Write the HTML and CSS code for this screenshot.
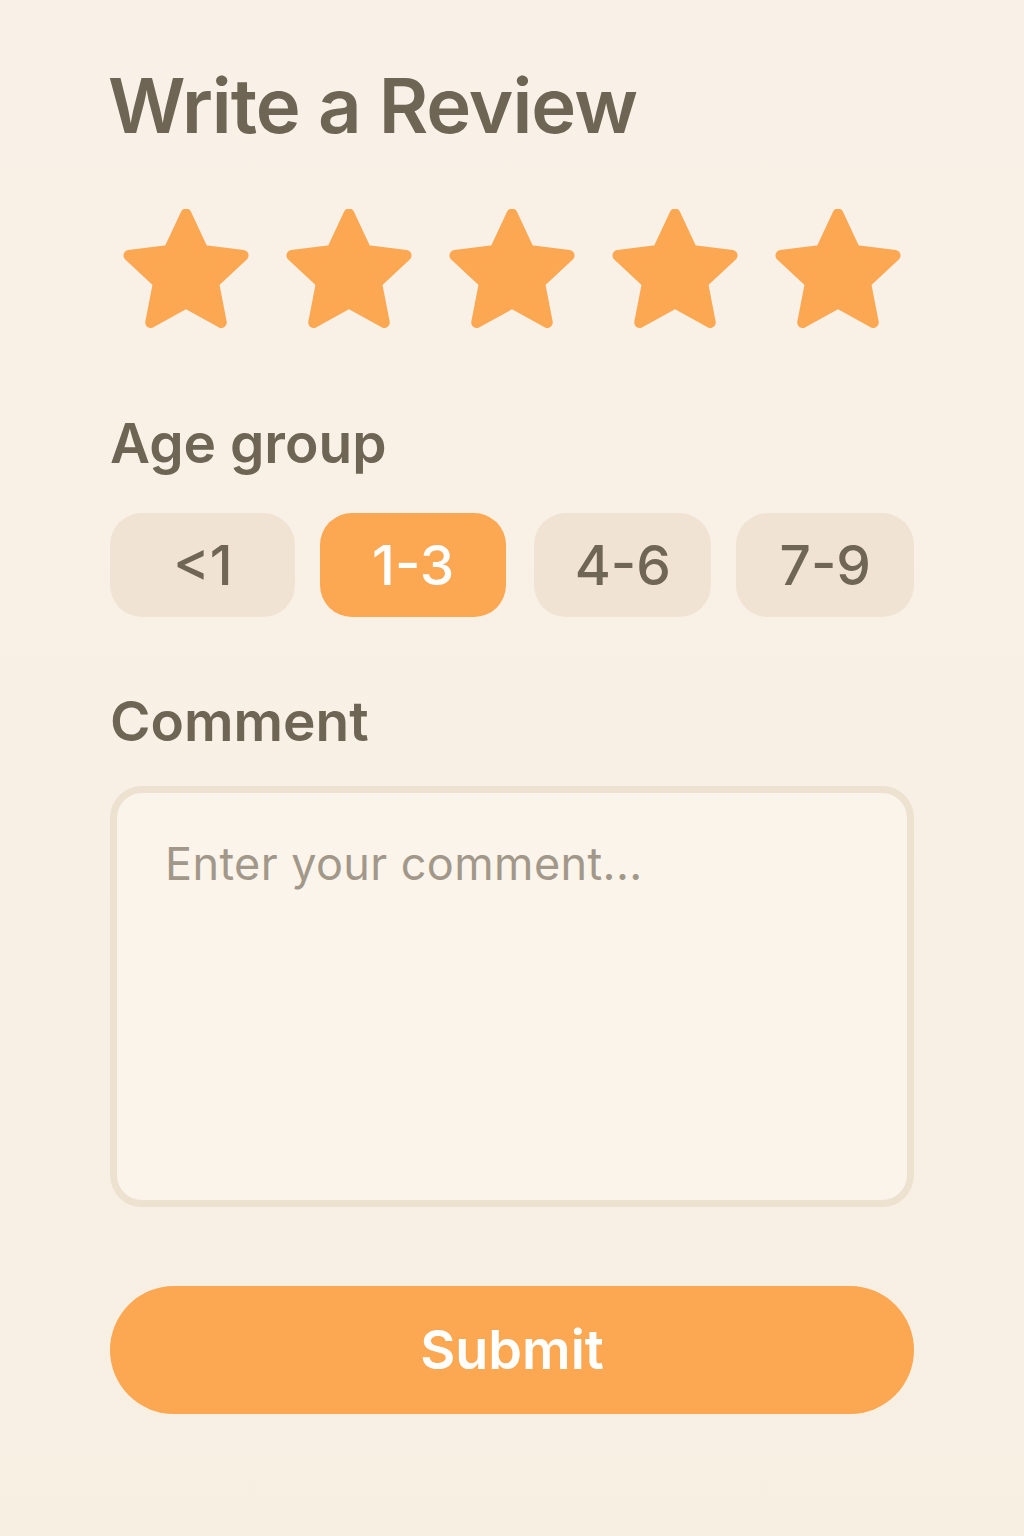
FILE: index.html
```html
<!DOCTYPE html>
<html lang="en">
<head>
<meta charset="utf-8">
<title>Write a Review</title>
<link rel="stylesheet" href="styles.css">
</head>
<body>
<main class="page">
  <h1 class="title">Write a Review</h1>
  <div class="stars">
    <svg class="star" viewBox="-63 -65 126 119" width="126" height="119"><polygon points="0,-60 17.05,-23.46 57.06,-18.54 27.58,8.96 35.27,48.54 0,29 -35.27,48.54 -27.58,8.96 -57.06,-18.54 -17.05,-23.46"/></svg>
    <svg class="star" viewBox="-63 -65 126 119" width="126" height="119"><polygon points="0,-60 17.05,-23.46 57.06,-18.54 27.58,8.96 35.27,48.54 0,29 -35.27,48.54 -27.58,8.96 -57.06,-18.54 -17.05,-23.46"/></svg>
    <svg class="star" viewBox="-63 -65 126 119" width="126" height="119"><polygon points="0,-60 17.05,-23.46 57.06,-18.54 27.58,8.96 35.27,48.54 0,29 -35.27,48.54 -27.58,8.96 -57.06,-18.54 -17.05,-23.46"/></svg>
    <svg class="star" viewBox="-63 -65 126 119" width="126" height="119"><polygon points="0,-60 17.05,-23.46 57.06,-18.54 27.58,8.96 35.27,48.54 0,29 -35.27,48.54 -27.58,8.96 -57.06,-18.54 -17.05,-23.46"/></svg>
    <svg class="star" viewBox="-63 -65 126 119" width="126" height="119"><polygon points="0,-60 17.05,-23.46 57.06,-18.54 27.58,8.96 35.27,48.54 0,29 -35.27,48.54 -27.58,8.96 -57.06,-18.54 -17.05,-23.46"/></svg>
  </div>
  <h2 class="label label-age">Age group</h2>
  <div class="chips">
    <button class="chip chip-wide">&lt;1</button>
    <button class="chip chip-wide chip-active">1-3</button>
    <button class="chip">4-6</button>
    <button class="chip">7-9</button>
  </div>
  <h2 class="label label-comment">Comment</h2>
  <textarea class="comment" placeholder="Enter your comment..."></textarea>
  <button class="submit">Submit</button>
</main>
</body>
</html>
```
FILE: styles.css
```css
* { box-sizing: border-box; }

html, body {
  margin: 0;
  padding: 0;
}

body {
  background: linear-gradient(180deg, #f9f1e7 0%, #f9f0e5 60%, #f8efe3 100%);
  min-height: 1536px;
  font-family: "Inter", "Liberation Sans", sans-serif;
  color: #6e6454;
}

.page {
  width: 804px;
  margin-left: 110px;
  padding-top: 67px;
  display: flex;
  flex-direction: column;
}

.title {
  margin: 0 0 0 -2px;
  font-size: 76px;
  line-height: 1;
  font-weight: 600;
  letter-spacing: -1px;
  color: #6f6554;
}

.stars {
  display: flex;
  gap: 37px;
  margin-top: 66px;
  margin-left: 13px;
}

.star {
  display: block;
}

.star polygon {
  fill: #fca751;
  stroke: #fca751;
  stroke-width: 11;
  stroke-linejoin: round;
}

.label {
  margin: 0;
  font-size: 55px;
  line-height: 1;
  font-weight: 600;
  color: #6f6554;
}

.label-age {
  margin-top: 88px;
}

.label-comment {
  margin-top: 77px;
}

.chips {
  display: flex;
  gap: 25px;
  margin-top: 42px;
}

.chip {
  width: 178px;
  height: 104px;
  border: none;
  border-radius: 32px;
  background: #f0e3d3;
  color: #706655;
  font-family: "Inter", "Liberation Sans", sans-serif;
  font-size: 55px;
  font-weight: 500;
  line-height: 1;
  padding: 0;
  display: flex;
  align-items: center;
  justify-content: center;
}

.chip-wide {
  width: 186px;
}

.chip-active {
  background: #fca751;
  color: #ffffff;
  margin-right: 3px;
}

.comment {
  margin-top: 37px;
  width: 804px;
  height: 421px;
  border: 7px solid #ede1cf;
  border-radius: 32px;
  background: #fbf4eb;
  padding: 48px 48px;
  font-family: "Inter", "Liberation Sans", sans-serif;
  font-size: 45px;
  letter-spacing: 0.4px;
  line-height: 1;
  color: #6e6454;
  resize: none;
  outline: none;
}

.comment::placeholder {
  color: #a2988a;
  font-weight: 400;
}

.submit {
  margin-top: 79px;
  width: 804px;
  height: 128px;
  border: none;
  border-radius: 64px;
  background: #fca751;
  color: #ffffff;
  font-family: "Inter", "Liberation Sans", sans-serif;
  font-size: 54px;
  font-weight: 600;
  line-height: 1;
  padding: 0;
}
```
